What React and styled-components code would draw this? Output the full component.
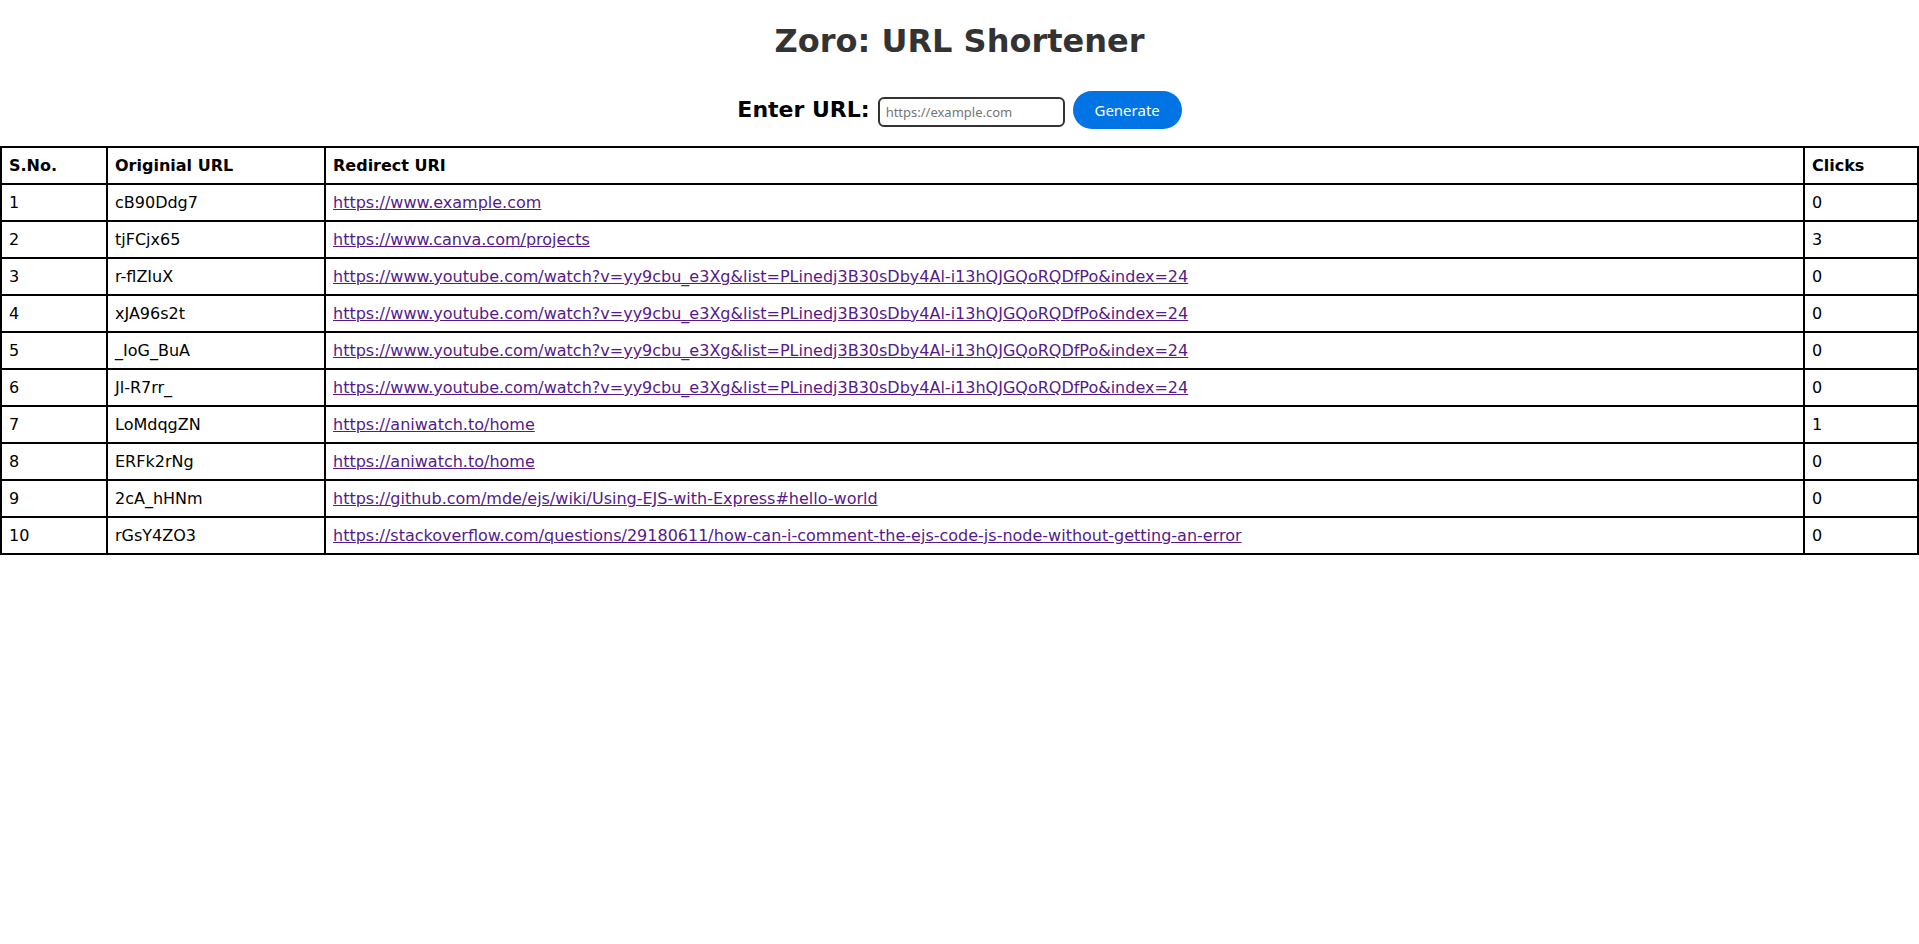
import React, { useState } from 'react'
import styled, { createGlobalStyle } from 'styled-components'

const GlobalStyle = createGlobalStyle`
	body {
		margin: 0;
		background: #fff;
		font-family: "DejaVu Sans", sans-serif;
		color: #000;
	}
`

const rows = [
	['cB90Ddg7', 'https://www.example.com', 0],
	['tjFCjx65', 'https://www.canva.com/projects', 3],
	['r-flZIuX', 'https://www.youtube.com/watch?v=yy9cbu_e3Xg&list=PLinedj3B30sDby4Al-i13hQJGQoRQDfPo&index=24', 0],
	['xJA96s2t', 'https://www.youtube.com/watch?v=yy9cbu_e3Xg&list=PLinedj3B30sDby4Al-i13hQJGQoRQDfPo&index=24', 0],
	['_IoG_BuA', 'https://www.youtube.com/watch?v=yy9cbu_e3Xg&list=PLinedj3B30sDby4Al-i13hQJGQoRQDfPo&index=24', 0],
	['Jl-R7rr_', 'https://www.youtube.com/watch?v=yy9cbu_e3Xg&list=PLinedj3B30sDby4Al-i13hQJGQoRQDfPo&index=24', 0],
	['LoMdqgZN', 'https://aniwatch.to/home', 1],
	['ERFk2rNg', 'https://aniwatch.to/home', 0],
	['2cA_hHNm', 'https://github.com/mde/ejs/wiki/Using-EJS-with-Express#hello-world', 0],
	['rGsY4ZO3', 'https://stackoverflow.com/questions/29180611/how-can-i-comment-the-ejs-code-js-node-without-getting-an-error', 0],
]

const App = () => {
	const [value, setValue] = useState('')

	const onSubmit = (event) => {
		event.preventDefault()
	}

	return (
		<Page>
			<GlobalStyle />
			<Title>Zoro: URL Shortener</Title>
			<Form onSubmit={onSubmit}>
				<Label htmlFor="fullUrl">Enter URL:</Label>
				<Input
					id="fullUrl"
					value={value}
					onChange={(e) => setValue(e.target.value)}
					placeholder="https://example.com"
				/>
				<Generate type="submit">Generate</Generate>
			</Form>
			<Table>
				<colgroup>
					<col style={{ width: 106 }} />
					<col style={{ width: 218 }} />
					<col />
					<col style={{ width: 114 }} />
				</colgroup>
				<thead>
					<tr>
						<Head>S.No.</Head>
						<Head>Originial URL</Head>
						<Head>Redirect URI</Head>
						<Head>Clicks</Head>
					</tr>
				</thead>
				<tbody>
					{rows.map(([short, full, clicks], i) => (
						<tr key={short}>
							<Cell>{i + 1}</Cell>
							<Cell>{short}</Cell>
							<Cell>
								<Link href={full}>{full}</Link>
							</Cell>
							<Cell>{clicks}</Cell>
						</tr>
					))}
				</tbody>
			</Table>
		</Page>
	)
}

export default App

const Page = styled.div`
	text-align: center;
`

const Title = styled.h1`
	font-size: 32px;
	font-weight: bold;
	color: #333;
	margin: 22px 0 31px;
`

const Form = styled.form`
	display: flex;
	justify-content: center;
	align-items: center;
	margin: 0 0 17px;
`

const Label = styled.label`
	font-size: 22px;
	font-weight: bold;
	margin-right: 8px;
	margin-bottom: 2px;
`

const Input = styled.input.attrs({ type: 'text' })`
	box-sizing: border-box;
	width: 187px;
	height: 30px;
	padding: 0 6px;
	border: 2px solid #333;
	border-radius: 6px;
	font-family: "Noto Sans", sans-serif;
	font-size: 13px;
	margin-top: 4px;

	&::placeholder {
		color: #757575;
	}
`

const Generate = styled.button`
	box-sizing: border-box;
	width: 109px;
	height: 38px;
	margin-left: 8px;
	border: none;
	border-radius: 19px;
	background: #0074e4;
	color: #fff;
	font-family: "Noto Sans", sans-serif;
	font-size: 15px;
	cursor: pointer;
`

const Table = styled.table`
	width: 100%;
	table-layout: fixed;
	border-collapse: collapse;
	border: 2px solid #000;
	text-align: left;
	font-size: 16px;
`

const Head = styled.th`
	border: 2px solid #000;
	padding: 8px 7px;
	font-weight: bold;
	white-space: nowrap;
`

const Cell = styled.td`
	border: 2px solid #000;
	padding: 8px 7px;
	white-space: nowrap;
`

const Link = styled.a`
	color: #551a8b;
`
